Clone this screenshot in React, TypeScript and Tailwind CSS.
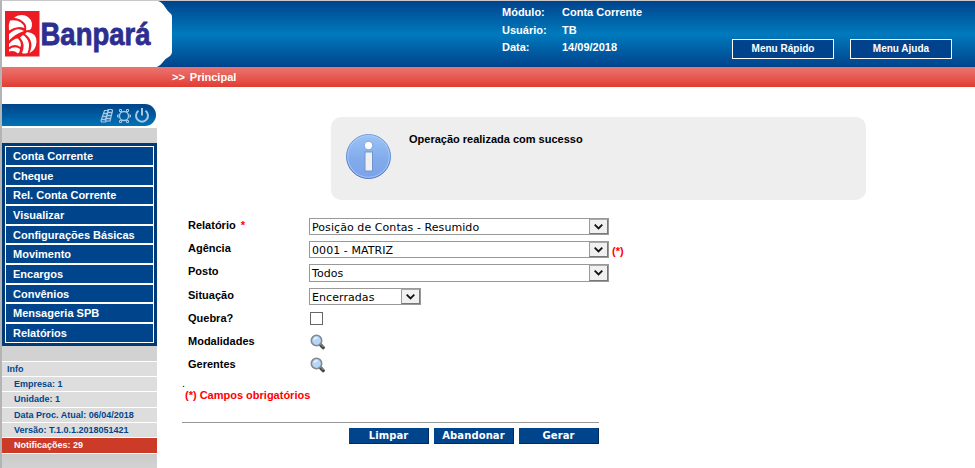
const menu: [string, string][] = [
  ['Conta Corrente', 'h-[18px] leading-[18px]'],
  ['Cheque', 'h-[18px] leading-[18px]'],
  ['Rel. Conta Corrente', 'h-[17px] leading-[16px]'],
  ['Visualizar', 'h-[18px] leading-[18px]'],
  ['Configurações Básicas', 'h-[17px] leading-[18px]'],
  ['Movimento', 'h-[18px] leading-[18px]'],
  ['Encargos', 'h-[18px] leading-[18px]'],
  ['Convênios', 'h-[17px] leading-[18px]'],
  ['Mensageria SPB', 'h-[18px] leading-[18px]'],
  ['Relatórios', 'h-[18px] leading-[18px]'],
];

const info: [string, string][] = [
  ['Empresa: 1', 'h-[14px]'],
  ['Unidade: 1', 'h-[15px]'],
  ['Data Proc. Atual: 06/04/2018', 'h-[14px]'],
  ['Versão: T.1.0.1.2018051421', 'h-[14px]'],
];

function Logo() {
  return (
    <svg width="172" height="66" viewBox="0 1 172 66" className="shrink-0">
      <path d="M0 1H156Q160 2 163 7Q166 12 169 14Q170 15 170 17V52Q170 54 168 56Q164 58 161 62Q158 66 155 67H0Z" fill="#fff" />
      <rect x="3" y="11" width="34.500" height="45.500" fill="#ed1c24" />
      <g fill="#fff">
        <path d="M12 17.500Q20 13 26 17Q32 22 29 29Q26 31 24 30Q26 21 12 17.500Z" />
        <path d="M8 20.500Q20 19 22.500 28Q15 25 7 30.500Q6 25 8 20.500Z" />
        <path d="M7 34Q15 26.500 22 31Q13 34 7 40.500Z" />
        <path d="M25 32Q35 33 34.500 42Q34 50 27.500 53Q33 41 23 34Z" />
        <path d="M21 35Q30 41 25.500 53Q22 54 20 53Q24 44 18 37.500Z" />
        <path d="M7 44Q12 38 16 38.500Q20 43 18.500 47Q13 43 7 47Z" />
        <path d="M7 49.500Q13 45.500 18 49Q18 52 16 53.500Q12 50 7 51.500Z" />
      </g>
      <text x="38.500" y="45" textLength="110" lengthAdjust="spacingAndGlyphs" fill="#2d2e8f" stroke="#2d2e8f" strokeWidth=".8" className="font-['Liberation_Sans',sans-serif] text-[31px] font-bold">Banpará</text>
    </svg>
  );
}

function ToolIcons() {
  return (
    <svg width="54" height="22" viewBox="99 104 54 22" fill="none" stroke="#a9c8e4">
      <path d="M104.500 110.500H107L108.500 109.500H112L112.500 111L110 121H107L105.500 122H101.500L101 120.500Z" strokeWidth="1.200" />
      <path d="M104 113.500H107L108 112.500H112M103 116.500H106L107 115.500H111M102 119.500H105L106 118.500H110M108.300 110L105.500 121" strokeWidth="1.500" />
      <circle cx="124" cy="116" r="4.500" strokeWidth="1.300" />
      <path d="M119.500 109.500h2v2h-2zM126.500 109.500h2v2h-2zM117.500 115h2v2h-2zM128.500 115h2v2h-2zM119.500 120.500h2v2h-2zM126.500 120.500h2v2h-2z" strokeWidth="1" />
      <path d="M138.500 110.800A6 6 0 1 0 145.500 110.800M142 108V115.500" strokeWidth="2" />
    </svg>
  );
}

function InfoIcon() {
  return (
    <svg width="46" height="46" viewBox="0 0 46 46">
      <defs>
        <linearGradient id="disc" x2="0" y2="1">
          <stop stopColor="#9cc4f4" />
          <stop offset=".55" stopColor="#82abec" />
          <stop offset="1" stopColor="#7ba2ea" />
        </linearGradient>
        <linearGradient id="rim" x2="0" y2="1">
          <stop stopColor="#6fa0e0" />
          <stop offset="1" stopColor="#4d72c8" />
        </linearGradient>
      </defs>
      <circle cx="22.500" cy="22.500" r="22" fill="url(#disc)" stroke="url(#rim)" />
      <circle cx="22.500" cy="22.500" r="20.800" fill="none" stroke="#b5d2f7" strokeOpacity=".7" />
      <circle cx="22.500" cy="11.500" r="4.200" fill="#fff" stroke="#7095ce" strokeWidth=".8" />
      <rect x="19" y="18" width="7.500" height="19" fill="#f0f0f2" stroke="#7095ce" />
    </svg>
  );
}

function Magnifier() {
  return (
    <svg width="16" height="16" viewBox="0 0 16 16" className="block">
      <path d="M10.500 10.800L13.200 13.600" stroke="#484848" strokeWidth="3.400" strokeLinecap="round" />
      <path d="M10.500 10L13.500 13" stroke="#aaa" strokeWidth="1" />
      <circle cx="6.500" cy="6.500" r="5.200" fill="#b5d6f8" stroke="#85898f" strokeWidth="1.600" />
      <path d="M3.500 6.300A3.200 3.200 0 0 1 8.500 3.800Q5.500 4.800 3.500 6.300" fill="#eff8ff" />
    </svg>
  );
}

function Select({ value, width = 'w-[300px]', height = 'h-[17px]' }: { value: string; width?: string; height?: string }) {
  return (
    <div className={`flex items-stretch border border-[#999] bg-white ${width} ${height}`}>
      <span className="flex-1 pl-[2px] font-['DejaVu_Sans',sans-serif] text-[11px] leading-[17px] font-normal tracking-[0.07px] text-black">{value}</span>
      <span className="flex w-[19px] items-center justify-center border border-[#777] border-t-[#aaa] border-l-[#999] bg-[#f0f0f0]">
        <svg width="9" height="6" viewBox="0 0 9 6" fill="none" stroke="#111" strokeWidth="1.800"><path d="M.7 .7L4.500 4.500L8.300 .7" /></svg>
      </span>
    </div>
  );
}

const fields: { label: string; h: string; cell: React.ReactNode; req?: boolean }[] = [
  { label: 'Relatório', req: true, h: 'h-[23px]', cell: <Select value="Posição de Contas - Resumido" /> },
  { label: 'Agência', h: 'h-[23px]', cell: <><Select value="0001 - MATRIZ" /><span className="pt-[3px] pl-[3px] leading-[14px] text-[#f00]">(*)</span></> },
  { label: 'Posto', h: 'h-[24px]', cell: <Select value="Todos" height="h-[18px]" /> },
  { label: 'Situação', h: 'h-[23px]', cell: <Select value="Encerradas" width="w-[112px]" /> },
  { label: 'Quebra?', h: 'h-[23px]', cell: <span className="mt-px ml-[1px] h-[13px] w-[13px] border border-[#666] bg-white" /> },
  { label: 'Modalidades', h: 'h-[23px]', cell: <span className="ml-[1px]"><Magnifier /></span> },
  { label: 'Gerentes', h: 'h-[21px]', cell: <span className="ml-[1px]"><Magnifier /></span> },
];

export default function App() {
  return (
    <div className="h-[468px] w-[975px] overflow-hidden border-t border-l-2 border-t-[#c8c8c8] border-l-[#b4b4b4] bg-white font-['Liberation_Sans',Arial,sans-serif] text-[11px] font-bold text-black">
      <header className="flex h-[66px] bg-linear-to-b from-[#00438c] via-[#007abd] to-[#00438c] text-white">
        <Logo />
        <div className="ml-[328px] grid h-[54px] grid-cols-[60px_170px] grid-rows-[18px_17px_17px] pt-[3px] leading-[17px]">
          <span>Módulo:</span><span>Conta Corrente</span>
          <span>Usuário:</span><span>TB</span>
          <span>Data:</span><span>14/09/2018</span>
        </div>
        <div className="mt-[38px] flex gap-[16px] text-[10px] leading-[18px]">
          <button className="h-[20px] w-[102px] border border-white bg-[#00438c] text-center">Menu Rápido</button>
          <button className="h-[20px] w-[102px] border border-white bg-[#00438c] text-center">Menu Ajuda</button>
        </div>
      </header>
      <div className="flex h-[20px] gap-[5px] bg-linear-to-b from-[#ea746f] to-[#e23a31] pl-[170px] leading-[20px] text-white">
        <span>&gt;&gt;</span><span>Principal</span>
      </div>
      <div className="flex">
        <aside className="w-[155px] pt-[17px]">
          <div className="mr-px flex h-[22px] justify-end rounded-r-full bg-linear-to-b from-[#004489] to-[#0072b6] pr-[3px]"><ToolIcons /></div>
          <div className="mt-[2px] h-[15px] bg-[#d2d2d2]" />
          <nav className="bg-[#003b78] p-[3px]">
            <div className="flex w-[149px] flex-col gap-[2px] bg-white p-px">
              {menu.map(([m, h]) => (
                <div key={m} className={`bg-[#00458c] pl-[7px] text-white ${h}`}>{m}</div>
              ))}
            </div>
          </nav>
          <div className="h-[15px] bg-[#d2d2d2]" />
          <div className="flex flex-col gap-px bg-white py-px text-[9px] leading-[14px] text-[#00458c]">
            <div className="h-[14px] bg-[#ddd] pl-[5px]">Info</div>
            {info.map(([t, h]) => <div key={t} className={`bg-[#ddd] pl-[12px] ${h}`}>{t}</div>)}
            <div className="h-[15px] bg-[#cb3b27] pl-[12px] text-white">Notificações: 29</div>
          </div>
          <div className="h-[20px] bg-linear-to-b from-[#cbcbcb] to-[#d5d5d5]" />
        </aside>
        <main className="pt-[30px] pl-[25px]">
          <div className="ml-[149px] flex h-[83px] w-[535px] rounded-[10px] bg-[#eee] pt-[17px] pl-[15px]">
            <InfoIcon />
            <span className="-mt-[2px] ml-[17px] leading-[14px]">Operação realizada com sucesso</span>
          </div>
          <div className="mt-[18px] pl-[6px]">
            {fields.map((f) => (
              <div key={f.label} className={`flex ${f.h}`}>
                <span className="w-[121px] leading-[15px]">{f.label}{f.req && <span className="pl-[5px] text-[#f00]">*</span>}</span>
                <div className="flex items-start">{f.cell}</div>
              </div>
            ))}
          </div>
          <div className="h-[10px] text-[11px] leading-[10px] font-normal">.</div>
          <div className="pl-[3px] leading-[14px] text-[#f00]">(*) Campos obrigatórios</div>
          <div className="mt-[20px] w-[417px] border-t border-[#999]" />
          <div className="mt-[5px] flex w-[417px] justify-end gap-[5px] font-['DejaVu_Sans',sans-serif] text-[10px] leading-[16px] tracking-[0.1px] text-white">
            {['Limpar', 'Abandonar', 'Gerar'].map((b) => (
              <button key={b} className="h-[16px] w-[80px] border-r border-b border-[#002a5c] bg-[#00458c] text-center">{b}</button>
            ))}
          </div>
        </main>
      </div>
    </div>
  );
}
